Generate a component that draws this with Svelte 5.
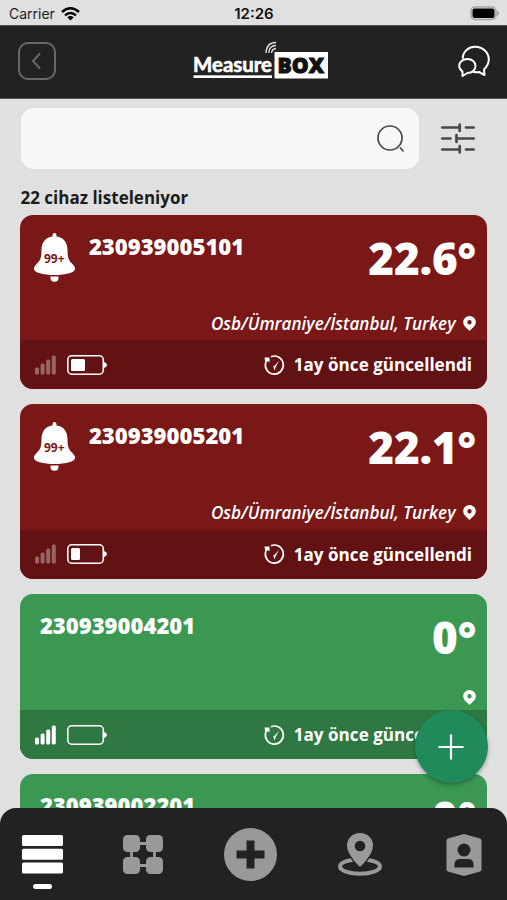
<style>

  :global(body) {
    margin: 0;
    background-color: #e0e0e0;
  }

  .app {
    position: relative;
    display: flex;
    flex-direction: column;
    width: 507px;
    height: 900px;
    overflow: hidden;
    background-color: #e0e0e0;
    font-family: "Open Sans", "Noto Sans", sans-serif;
    color: #1c1c1c;
  }

  svg {
    display: block;
    flex: none;
    overflow: visible;
  }

  button {
    padding: 0;
    border: none;
    background: none;
    color: inherit;
    font: inherit;
    cursor: pointer;
  }

  /* Status bar */
  .status {
    display: grid;
    flex: none;
    grid-template-columns: 1fr auto 1fr;
    align-items: center;
    box-sizing: border-box;
    height: 25px;
    padding: 2px 8px 0 9px;
    font-family: Inter, sans-serif;
    font-size: 14px;
    line-height: 23px;
  }
  .carrier {
    display: flex;
    align-items: center;
    gap: 6px;
  }
  .clock {
    font-size: 15px;
    font-weight: 600;
    color: #111;
  }
  .status-battery {
    justify-self: end;
  }

  /* Header */
  header {
    display: flex;
    flex: none;
    align-items: center;
    justify-content: space-between;
    box-sizing: border-box;
    height: 74px;
    padding: 0 17px 2px 18px;
    border-top: 1px solid #555;
    border-bottom: 1px solid #555;
    background-color: #222;
  }
  .logo {
    margin: -2px 0 0 7px;
  }

  /* Search */
  .search-row {
    display: flex;
    flex: none;
    align-items: center;
    gap: 22px;
    padding: 9px 32px 0 20.5px;
  }
  .search {
    display: flex;
    align-items: center;
    box-sizing: border-box;
    width: 398.5px;
    height: 61px;
    padding-right: 15px;
    border-radius: 13px;
    background-color: #f7f7f7;
  }
  .search input {
    flex: 1;
    min-width: 0;
    padding: 0 16px;
    border: none;
    outline: none;
    background: none;
    font: inherit;
  }
  .count {
    flex: none;
    margin: 16px 0 4.5px 20.5px;
    font-size: 17px;
    font-weight: 700;
    line-height: 25px;
  }

  /* Device cards, the list ends underneath the bottom navigation */
  .cards {
    display: flex;
    flex: 1;
    flex-direction: column;
    gap: 15px;
    min-height: 0;
    margin-bottom: 48px;
    padding: 0 20px 0 20.4px;
    overflow: hidden;
  }
  .card {
    display: flex;
    flex-direction: column;
    flex: none;
    height: 174.5px;
    border-radius: 13px;
    overflow: hidden;
    background-color: #7a1818;
    color: #fff;
  }
  .card.ok {
    height: 165.5px;
    background-color: #3a9852;
  }
  .card-body {
    display: flex;
    flex: 1;
    flex-direction: column;
    justify-content: space-between;
    padding: 14px 11px 4px 13.5px;
  }
  .ok .card-body {
    padding-left: 19.5px;
    padding-bottom: 0;
  }
  .card-top {
    display: flex;
    align-items: flex-start;
  }
  .bell {
    margin: 4px 14px 0 0;
  }
  .serial {
    flex: 1;
    font-size: 22.1px;
    font-weight: 800;
    line-height: 34px;
  }
  .temp {
    font-size: 44px;
    font-weight: 800;
    line-height: 58px;
    letter-spacing: -0.2px;
  }
  .location {
    display: flex;
    align-items: center;
    justify-content: flex-end;
    gap: 7px;
    height: 26px;
    padding-right: 0.5px;
    font-size: 17.1px;
    font-style: italic;
    font-weight: 600;
  }
  .card-foot {
    display: flex;
    align-items: center;
    height: 49px;
    padding: 0 15px 0 14.5px;
    background-color: #621212;
  }
  .ok .card-foot {
    background-color: #2f7842;
  }
  .battery {
    margin-left: 11px;
  }
  .updated {
    display: flex;
    align-items: center;
    gap: 9px;
    margin-left: auto;
    font-size: 17.1px;
    font-weight: 700;
  }

  /* Floating add button */
  .fab {
    position: absolute;
    left: 414.5px;
    top: 710px;
    display: grid;
    place-items: center;
    width: 73px;
    height: 73px;
    border-radius: 50%;
    background-color: #218a5b;
    box-shadow: 0 2px 4px rgba(0,0,0,0.3);
  }

  /* Bottom navigation */
  nav {
    position: absolute;
    left: 0;
    right: 0;
    bottom: 0;
    display: flex;
    align-items: flex-start;
    gap: 60.5px;
    box-sizing: border-box;
    height: 92px;
    padding: 19px 25px 0 22px;
    border-radius: 16px 16px 0 0;
    background-color: #222;
    color: #999;
  }
  nav button {
    display: flex;
    flex-direction: column;
    align-items: center;
    justify-content: center;
    height: 55px;
  }
  nav button:nth-child(2) {
    margin: 0 0.7px 0 -0.7px;
  }
  nav button:last-child {
    margin-left: auto;
  }
  nav button.active {
    position: relative;
    color: #fff;
  }
  .active::after {
    content: '';
    position: absolute;
    top: 56.5px;
    width: 19px;
    height: 5px;
    border-radius: 3px;
    background-color: #fff;
  }

  /* Logo lettering */
  .logo-name {
    font: 700 21px Lato, sans-serif;
    fill: #fff;
    stroke: #fff;
    stroke-width: 0.6px;
  }
  .logo-box {
    font: 800 21.5px "Open Sans", sans-serif;
    fill: #111;
    stroke: #111;
    stroke-width: 1px;
  }
  .bell-count {
    font: 700 12px "Open Sans", sans-serif;
    fill: #7a1818;
  }

</style>

<script>

  // Devices in the order they are listed
  let devices = [
    { serial: '230939005101', temp: '22.6°', place: 'Osb/Ümraniye/İstanbul, Turkey', alarms: '99+', charge: 14, online: false },
    { serial: '230939005201', temp: '22.1°', place: 'Osb/Ümraniye/İstanbul, Turkey', alarms: '99+', charge: 9, online: false },
    { serial: '230939004201', temp: '0°', place: '', alarms: '', charge: 0, online: true },
    { serial: '230939002201', temp: '0°', place: '', alarms: '', charge: 0, online: true },
  ];

  let total = 22;
  let query = '';

  // Which bottom tab is selected
  let tab = 'list';

</script>

<div class='app'>

  <div class='status'>
    <div class='carrier'>
      Carrier
      <svg width="19" height="14" viewBox="0 0 19 14" fill="none" stroke="#000" stroke-width="2.4">
        <path d="M1 5 Q9.500 -2.500 18 5"/>
        <path d="M4 8.300 Q9.500 3.500 15 8.300"/>
        <path d="M6.300 10.200 Q9.500 7.600 12.700 10.200 L9.500 13.400 Z" fill="#000" stroke="none"/>
      </svg>
    </div>
    <div class='clock'>12:26</div>
    <svg class='status-battery' width="29" height="15" viewBox="0 0 29 15">
      <rect x="1" y="1" width="25" height="12.500" rx="4" fill="none" stroke="#a2a2a2" stroke-width="1.500"/>
      <rect x="2.500" y="2.500" width="22" height="9.500" rx="2" fill="#000"/>
      <path d="M27.500 5 Q29.500 7.200 27.500 9.500 Z" fill="#a2a2a2" stroke="#a2a2a2"/>
    </svg>
  </div>

  <header>
    <button aria-label='Geri'>
      <svg width="38" height="38" viewBox="0 0 38 38" fill="none" stroke="#686868" stroke-width="2">
        <rect x="1" y="1" width="36" height="36" rx="9"/>
        <path d="M21.500 12 L15 19 L21.500 26" stroke-linecap="round"/>
      </svg>
    </button>
    <svg class='logo' width="135" height="38" viewBox="0 0 135 38">
      <text class='logo-name' x="0" y="31" textLength="79" lengthAdjust="spacingAndGlyphs">Measure</text>
      <rect x="0.500" y="34.300" width="78.500" height="2.700" fill="#fff"/>
      <rect x="81.500" y="11" width="53.500" height="26.500" rx="0.500" fill="#fff"/>
      <text class='logo-box' x="84.500" y="32" textLength="46.500" lengthAdjust="spacingAndGlyphs">BOX</text>
      <g fill="none" stroke="#ddd" stroke-width="1.400">
        <path d="M73 12 Q73.500 1.500 83 1.500"/>
        <path d="M75.700 12 Q76 4.700 83 4.500"/>
        <path d="M78.500 12 Q79 8 83 7.500"/>
      </g>
    </svg>
    <button aria-label='Mesajlar'>
      <svg width="32" height="32" viewBox="0 0 32 32" fill="none" stroke="#fff" stroke-width="2" stroke-linejoin="round" stroke-linecap="round">
        <path d="M4.800 13 C5 6.500 10.500 1.700 17 1.700 C25 1.700 30.800 7.500 30.800 14.500 C30.800 19 28.500 22 26 24.500 L26.500 30 L21 27 Q18.500 27.700 15.500 26.800"/>
        <path d="M4.500 31 L4.500 26.500 C2.300 25 1.200 23 1.200 20.800 C1.200 17 4.800 14 9.400 14 C14 14 17.500 17 17.500 21 C17.500 25.300 14 28 9.500 28 Z"/>
      </svg>
    </button>
  </header>

  <div class='search-row'>
    <div class='search'>
      <input bind:value={query} aria-label='Cihaz ara'>
      <svg width="27" height="27" viewBox="0 0 27 27" fill="none" stroke="#484848" stroke-width="1.700">
        <circle cx="13" cy="13" r="12"/>
        <path d="M23 22.500 L26.500 26.500"/>
      </svg>
    </div>
    <button aria-label='Filtre'>
      <svg width="34" height="31" viewBox="0 0 34 31" fill="none" stroke="#484848" stroke-width="2.700" stroke-linecap="round">
        <path d="M1.300 4.500 H18 M25 4.500 H32.700 M18.700 1.500 V8"/>
        <path d="M1.300 15.500 H9.500 M16 15.500 H32.700 M15.500 12 V19"/>
        <path d="M1.300 26.500 H18 M25 26.500 H32.700 M18.700 23 V29.500"/>
      </svg>
    </button>
  </div>

  <div class='count'>{total} cihaz listeleniyor</div>

  <div class='cards'>
    {#each devices as device}
      <div class='card' class:ok={device.online}>
        <div class='card-body'>
          <div class='card-top'>
            {#if device.alarms}
              <svg class='bell' width="41" height="49" viewBox="0 0 41 49" fill="#fff">
                <path d="M18.500 3 Q18.500 0 20.500 0 Q22.500 0 22.500 3 V3.500 C30 4.500 33.500 10 33.500 17 C33.500 25 35 28 38.500 31 Q41 33.500 41 36 C41 39.500 32 42 20.500 42 C9 42 0 39.500 0 36 Q0 33.500 2.500 31 C6 28 7.500 25 7.500 17 C7.500 10 11 4.500 18.500 3.500 Z"/>
                <path d="M16.500 43.500 H24.500 Q25 48.800 20.500 48.800 Q16 48.800 16.500 43.500 Z"/>
                <text class='bell-count' x="20.300" y="29.500" text-anchor="middle">{device.alarms}</text>
              </svg>
            {/if}
            <div class='serial'>{device.serial}</div>
            <div class='temp'>{device.temp}</div>
          </div>
          <div class='location'>
            {device.place}
            <svg width="13" height="15" viewBox="0 0 13 15" fill="#fff">
              <path fill-rule="evenodd" d="M6.500 0 A6.300 6.300 0 0 1 12.800 6.300 C12.800 10 9 12.500 6.500 15 C4 12.500 0.200 10 0.200 6.300 A6.300 6.300 0 0 1 6.500 0 Z M6.500 4 A2.200 2.200 0 1 0 6.500 8.400 A2.200 2.200 0 1 0 6.500 4 Z"/>
            </svg>
          </div>
        </div>

        <div class='card-foot'>
          <svg width="21" height="20" viewBox="0 0 21 20" fill="#fff" opacity={device.online ? 1 : 0.35}>
            <rect x="0" y="12.500" width="4" height="7" rx="1.500"/>
            <rect x="5.600" y="8.500" width="4" height="11" rx="1.500"/>
            <rect x="11.200" y="4.500" width="4" height="15" rx="1.500"/>
            <rect x="16.800" y="0.500" width="4" height="19" rx="1.500"/>
          </svg>
          <svg class='battery' width="40" height="20" viewBox="0 0 40 20" fill="#fff">
            <rect x="0.800" y="0.800" width="35.500" height="18.400" rx="4" fill="none" stroke="#fff" stroke-width="1.600"/>
            <rect x="4" y="4" width={device.charge} height="12" rx="1.500"/>
            <path d="M37 7 Q40 8 40 10 Q40 12 37 13 Z"/>
          </svg>
          <div class='updated'>
            <svg width="21" height="20" viewBox="0 0 21 20" fill="none" stroke="#fff" stroke-width="1.700">
              <path d="M7 1.700 A9 9 0 1 1 1.700 7.500"/>
              <path d="M0.500 2.500 H5.500 V7.500 L4 6 L1.500 8.500 Z" fill="#fff" stroke="none"/>
              <path d="M10 11.500 L15 5.800 L11.800 12 L10.500 15.500 L9 10.500 Z" fill="#fff" stroke="none"/>
            </svg>
            1ay önce güncellendi
          </div>
        </div>
      </div>
    {/each}
  </div>

  <button class='fab' aria-label='Ekle'>
    <svg width="26" height="26" viewBox="0 0 26 26" stroke="#fff" stroke-width="2.200">
      <path d="M13 0.500 V25.500 M0.500 13 H25.500"/>
    </svg>
  </button>

  <nav>
    <button class:active={tab === 'list'} on:click={() => tab = 'list'} aria-label='Liste'>
      <svg width="41" height="39" viewBox="0 0 41 39" fill="currentColor">
        <rect width="41" height="11" rx="1.500"/>
        <rect y="13.700" width="41" height="11" rx="1.500"/>
        <rect y="27.500" width="41" height="11" rx="1.500"/>
      </svg>
    </button>
    <button class:active={tab === 'groups'} on:click={() => tab = 'groups'} aria-label='Gruplar'>
      <svg width="40" height="39" viewBox="0 0 40 39" fill="currentColor">
        <path d="M8.500 8.500 H31.500 V30.500 H8.500 Z" fill="none" stroke="currentColor" stroke-width="2.800"/>
        <rect width="17" height="17" rx="4.500"/>
        <rect x="23" width="17" height="17" rx="4.500"/>
        <rect y="22" width="17" height="17" rx="4.500"/>
        <rect x="23" y="22" width="17" height="17" rx="4.500"/>
      </svg>
    </button>
    <button class:active={tab === 'add'} on:click={() => tab = 'add'} aria-label='Yeni'>
      <svg width="53" height="53" viewBox="0 0 53 53">
        <circle cx="26.500" cy="26.500" r="26.500" fill="currentColor"/>
        <path d="M26.500 16.500 V36.500 M16.500 26.500 H36.500" stroke="#222" stroke-width="8" stroke-linecap="square"/>
      </svg>
    </button>
    <button class:active={tab === 'map'} on:click={() => tab = 'map'} aria-label='Harita'>
      <svg width="44" height="43" viewBox="0 0 44 43">
        <ellipse cx="22" cy="33.500" rx="20" ry="7.200" fill="none" stroke="currentColor" stroke-width="4"/>
        <path fill="currentColor" stroke="#222" stroke-width="3" paint-order="stroke" d="M22 0 C29.500 0 35 5.500 35 12.500 C35 20 28 28 22 34 C16 28 9 20 9 12.500 C9 5.500 14.500 0 22 0 Z"/>
        <circle cx="22" cy="13" r="5.300" fill="#222"/>
      </svg>
    </button>
    <button class:active={tab === 'profile'} on:click={() => tab = 'profile'} aria-label='Profil'>
      <svg width="36" height="42" viewBox="0 0 36 42">
        <path d="M18 0 L34 4.500 Q35.500 5 35.500 6.500 V35.500 Q35.500 37 34 37.500 L18 42 L2 37.500 Q0.500 37 0.500 35.500 V6.500 Q0.500 5 2 4.500 Z" fill="currentColor"/>
        <circle cx="18" cy="16" r="6.500" fill="#222"/>
        <path d="M8.500 33.500 V30.500 Q8.500 25 14 25 H22 Q27.500 25 27.500 30.500 V33.500 Z" fill="#222"/>
      </svg>
    </button>
  </nav>

</div>
